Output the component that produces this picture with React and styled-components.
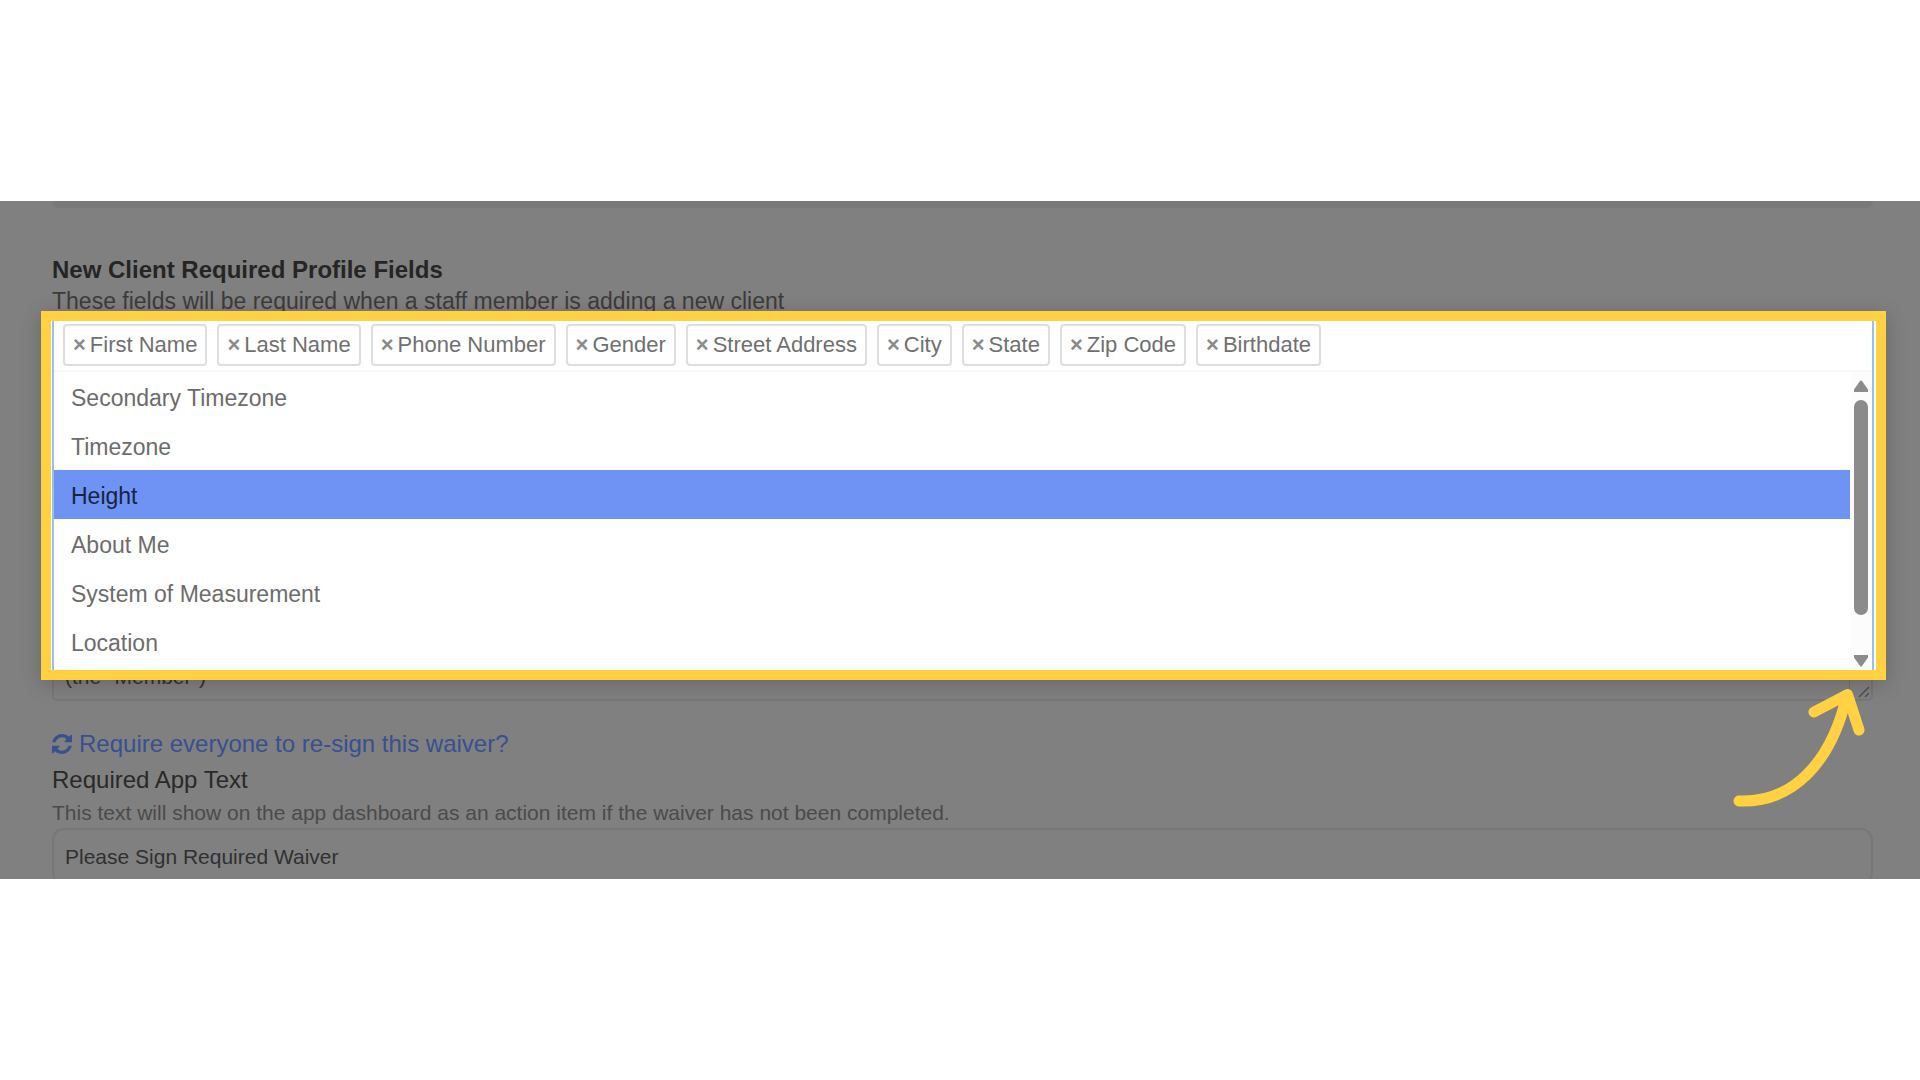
import React, { useState } from "react";
import styled, { createGlobalStyle } from "styled-components";

const GlobalStyle = createGlobalStyle`
  * {
    box-sizing: border-box;
  }

  body {
    margin: 0;
    background: #ffffff;
    font-family: "Liberation Sans", Arial, sans-serif;
  }
`;

const Page = styled.main`
  display: flex;
  flex-direction: column;
  justify-content: center;
  min-height: 100vh;
`;

const Settings = styled.section`
  position: relative;
  display: flex;
  flex-direction: column;
  align-items: stretch;
  overflow: hidden;
  padding: 0 47px 0 52px;
  background: #808080;
`;

const PreviousCard = styled.div`
  height: 7px;
  border-radius: 0 0 8px 8px;
  background: #797979;
`;

const Title = styled.h2`
  margin: 46px 0 0;
  color: #252525;
  font-size: 24px;
  line-height: 32px;
`;

const Description = styled.p`
  margin: 0;
  color: #3c3c3c;
  font-size: 23px;
  line-height: 30px;
`;

/* The open select floats over the waiver text and is ringed in yellow. */
const Spotlight = styled.div`
  position: absolute;
  top: 110px;
  left: 41px;
  right: 34px;
  border: 10px solid #ffd143;
  background: #ffffff;
  box-shadow: 0 4px 20px rgba(0, 0, 0, 0.2);
`;

const Select = styled.div`
  margin: 0 2px 0 1px;
  border: solid #92c4ef;
  border-width: 0 2px;
`;

const Chips = styled.ul`
  display: flex;
  gap: 10px;
  margin: 0;
  padding: 3px 9px 4px;
  border-bottom: 2px solid #f8f8f8;
  list-style: none;
`;

const Chip = styled.li`
  display: flex;
  align-items: center;
  gap: 4px;
  height: 42px;
  padding: 0 8px;
  border: 2px solid #dedede;
  border-radius: 4px;
  color: #707070;
  font-size: 22px;
  line-height: 32px;
  white-space: nowrap;
`;

const RemoveButton = styled.button`
  padding: 0;
  border: 0;
  background: none;
  color: #8b8b8b;
  font: bold 22px "Liberation Sans", Arial, sans-serif;
  line-height: 32px;
`;

const Dropdown = styled.div`
  display: flex;
  height: 298px;
`;

const Options = styled.ul`
  flex: 1;
  margin: 0;
  padding: 0;
  overflow: hidden;
  list-style: none;
`;

const Option = styled.li`
  height: 49px;
  padding: 0 17px;
  background: ${(props) => (props.$active ? "#6f93f5" : "transparent")};
  color: ${(props) => (props.$active ? "#182340" : "#6c6c6c")};
  font-size: 23px;
  line-height: 53px;
`;

const Scrollbar = styled.div`
  display: flex;
  flex-direction: column;
  align-items: center;
  width: 22px;
  padding: 8px 0 3px;
  background: #fcfcfc;
`;

const Thumb = styled.div`
  width: 14px;
  height: 215px;
  margin: 8px 0 auto;
  border-radius: 7px;
  background: #8b8b8b;
`;

const WaiverField = styled.div`
  position: relative;
  display: flex;
  margin-top: 284px;
`;

const WaiverText = styled.textarea`
  flex: 1;
  height: 101px;
  padding: 61px 11px 0;
  border: 2px solid #777777;
  border-radius: 5px;
  outline: none;
  resize: none;
  background: transparent;
  color: #333333;
  font: 21px "Liberation Sans", Arial, sans-serif;
  line-height: 28px;
  overflow: hidden;
`;

const ResizeHandle = styled.svg`
  position: absolute;
  right: 2px;
  bottom: 2px;
`;

const ResignLink = styled.a`
  display: flex;
  align-items: center;
  gap: 7px;
  align-self: flex-start;
  margin-top: 25px;
  color: #38508f;
  font-size: 24px;
  line-height: 36px;
  text-decoration: none;
`;

const Label = styled.label`
  color: #292929;
  font-size: 24px;
  line-height: 36px;
`;

const HelpText = styled.p`
  margin: 0;
  color: #4b4b4b;
  font-size: 21px;
  line-height: 30px;
`;

const InputClip = styled.div`
  display: flex;
  height: 51px;
  overflow: hidden;
`;

const TextInput = styled.input`
  flex: 1;
  height: 57px;
  padding: 0 11px;
  border: 2px solid #777777;
  border-radius: 12px;
  outline: none;
  background: transparent;
  color: #303030;
  font: 21px "Liberation Sans", Arial, sans-serif;
`;

const Arrow = styled.svg`
  position: absolute;
  right: 52px;
  bottom: 68px;
`;

const OPTIONS = [
  "Secondary Timezone",
  "Timezone",
  "Height",
  "About Me",
  "System of Measurement",
  "Location",
];

const RefreshIcon = () => (
  <svg width="20" height="20" viewBox="0 0 1536 1536" fill="currentColor" aria-hidden="true">
    <path d="M1511 928q0 5-1 7-64 268-268 434.5t-478 166.5q-146 0-282.5-55t-243.5-157l-129 129q-19 19-45 19t-45-19-19-45v-448q0-26 19-45t45-19h448q26 0 45 19t19 45-19 45l-137 137q71 66 161 102t187 36q134 0 250-65t186-179q11-17 53-117 8-23 30-23h192q13 0 22.5 9.5t9.5 22.5zm25-800v448q0 26-19 45t-45 19h-448q-26 0-45-19t-19-45 19-45l138-138q-148-137-349-137-134 0-250 65t-186 179q-11 17-53 117-8 23-30 23h-199q-13 0-22.5-9.5t-9.5-22.5v-7q65-268 270-434.5t480-166.5q146 0 284 55.5t245 156.5l130-129q19-19 45-19t45 19 19 45z" />
  </svg>
);

const App = () => {
  const [fields, setFields] = useState([
    "First Name",
    "Last Name",
    "Phone Number",
    "Gender",
    "Street Address",
    "City",
    "State",
    "Zip Code",
    "Birthdate",
  ]);
  const [active, setActive] = useState("Height");
  const [waiver, setWaiver] = useState('(the "Member")');
  const [appText, setAppText] = useState("Please Sign Required Waiver");

  const removeField = (name) => {
    setFields(fields.filter((field) => field !== name));
  };

  return (
    <Page>
      <GlobalStyle />
      <Settings>
        <PreviousCard />
        <Title id="fields-title">New Client Required Profile Fields</Title>
        <Description>
          These fields will be required when a staff member is adding a new client
        </Description>

        <WaiverField>
          <WaiverText
            aria-label="Waiver"
            value={waiver}
            onChange={(e) => setWaiver(e.target.value)}
          />
          <ResizeHandle width="22" height="22" viewBox="0 0 22 22" fill="none" aria-hidden="true">
            <path d="M0.5 0V22" stroke="#737373" />
            <path d="M10 20L20 10M16 20L20 16" stroke="#505050" strokeWidth="1.5" />
          </ResizeHandle>
        </WaiverField>

        <ResignLink href="#resign">
          <RefreshIcon />
          Require everyone to re-sign this waiver?
        </ResignLink>
        <Label htmlFor="app-text">Required App Text</Label>
        <HelpText id="app-text-help">
          This text will show on the app dashboard as an action item if the waiver has not been
          completed.
        </HelpText>
        <InputClip>
          <TextInput
            id="app-text"
            type="text"
            aria-describedby="app-text-help"
            value={appText}
            onChange={(e) => setAppText(e.target.value)}
          />
        </InputClip>

        <Spotlight>
          <Select>
            <Chips>
              {fields.map((field) => (
                <Chip key={field}>
                  <RemoveButton
                    type="button"
                    aria-label={`Remove ${field}`}
                    onClick={() => removeField(field)}
                  >
                    ×
                  </RemoveButton>
                  {field}
                </Chip>
              ))}
            </Chips>
            <Dropdown>
              <Options role="listbox" aria-labelledby="fields-title">
                {OPTIONS.map((option) => (
                  <Option
                    key={option}
                    role="option"
                    aria-selected={option === active}
                    $active={option === active}
                    onMouseEnter={() => setActive(option)}
                  >
                    {option}
                  </Option>
                ))}
              </Options>
              <Scrollbar aria-hidden="true">
                <svg width="14" height="12" viewBox="0 0 14 12" fill="#8b8b8b">
                  <path d="M6 1Q7 0 8 1L14 9.500V12H0V9.500Z" />
                </svg>
                <Thumb />
                <svg width="14" height="12" viewBox="0 0 14 12" fill="#8b8b8b">
                  <path d="M6 11Q7 12 8 11L14 2.500V0H0V2.500Z" />
                </svg>
              </Scrollbar>
            </Dropdown>
          </Select>
        </Spotlight>

        <Arrow width="136" height="122" viewBox="0 0 136 122" fill="none" aria-hidden="true">
          <path
            d="M7 112C60 114 99 75 115 6M82 23L115.500 5.500L127 41"
            stroke="#ffd143"
            strokeWidth="11"
            strokeLinecap="round"
            strokeLinejoin="round"
          />
        </Arrow>
      </Settings>
    </Page>
  );
};

export default App;
